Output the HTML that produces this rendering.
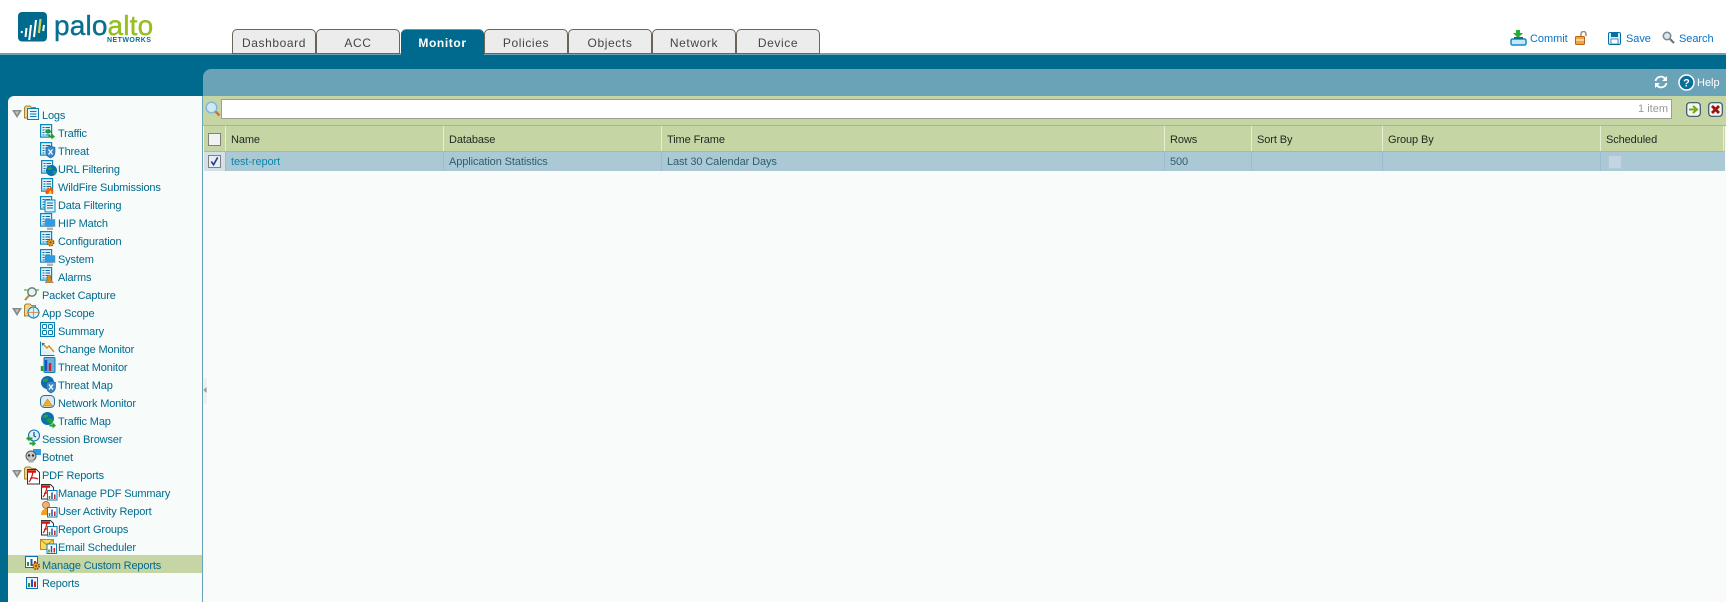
<!DOCTYPE html>
<html><head><meta charset="utf-8"><style>
html,body{margin:0;padding:0;width:1726px;height:602px;overflow:hidden;background:#fff;font-family:"Liberation Sans",sans-serif;font-size:11px}
.a{position:absolute}
.tab{position:absolute;top:29px;width:82px;height:23px;background:#ececec;border:1px solid #6b6558;border-radius:5px 5px 0 0;text-align:center;font-size:12px;line-height:26px;color:#444;letter-spacing:.6px}
.top{position:absolute;color:#0a72c4;font-size:11px;letter-spacing:-.05px;line-height:16px;top:31px}
.r{position:absolute;height:18px;line-height:20px;color:#006a8e;white-space:nowrap;font-size:11px;letter-spacing:-.15px}
.c{left:58px}.t{left:42px}
.th{position:absolute;top:126px;height:25px;line-height:28px;color:#1c2a20;font-size:11px;letter-spacing:-.1px;white-space:nowrap;border-left:1px solid #e6eed4;padding-left:5px;box-sizing:border-box}
.td{position:absolute;top:152px;height:19px;line-height:20px;color:#2e6070;font-size:11px;letter-spacing:-.1px;white-space:nowrap;border-left:1px solid #9dbccb;padding-left:5px;box-sizing:border-box}
</style></head><body>
<!-- logo -->
<svg class="a" style="left:18px;top:12px" width="29" height="30" viewBox="0 0 29 30"><rect width="29" height="29.500" rx="4" fill="#006a8e"/><g stroke-linecap="butt" fill="none" stroke="#fff"><path d="M4 19l-.4 2M8.500 16l-1 9M13 13l-1.800 15" stroke-width="2"/><path d="M18 8l-2 17" stroke-width="2"/><path d="M22.500 7l-1.600 14" stroke-width="2.200" stroke="#c4d94a"/><path d="M26 13l-.8 6" stroke-width="2"/></g></svg>
<div class="a" style="left:54px;top:6px;font-size:28px;line-height:40px;letter-spacing:.15px;color:#08708f;-webkit-text-stroke:.4px #08708f;white-space:nowrap">palo<span style="color:#94bf1f;-webkit-text-stroke:.4px #94bf1f">alto</span></div>
<div class="a" style="left:107px;top:36px;font-size:7px;line-height:9px;color:#08708f;font-weight:bold;letter-spacing:.45px">NETWORKS</div>

<!-- header band -->
<div class="a" style="left:0;top:53px;width:1726px;height:2px;background:#6aa2b8"></div>
<div class="a" style="left:0;top:55px;width:1726px;height:547px;background:#006a8e"></div>

<!-- tabs -->
<div class="tab" style="left:232px">Dashboard</div>
<div class="tab" style="left:316px">ACC</div>
<div class="a" style="left:401px;top:29px;width:83px;height:26px;background:#006a8e;border-top:1px solid #5e9cb4;box-sizing:border-box;border-radius:5px 5px 0 0;text-align:center;font-size:12px;line-height:26px;color:#fff;font-weight:bold;letter-spacing:.6px">Monitor</div>
<div class="tab" style="left:484px">Policies</div>
<div class="tab" style="left:568px">Objects</div>
<div class="tab" style="left:652px">Network</div>
<div class="tab" style="left:736px">Device</div>

<!-- top right -->
<svg class="a" style="left:1510px;top:30px" width="17" height="16" viewBox="0 0 17 16"><path d="M6 0h4v3h3L8 8 3 3h3z" fill="#22b033"/><rect x="1" y="9" width="15" height="6" rx="1.500" fill="#c6e6f6" stroke="#0b8fc4" stroke-width="1.500"/><rect x="4" y="7" width="9" height="2" fill="#0b6f96"/></svg>
<div class="top" style="left:1530px">Commit</div>
<svg class="a" style="left:1575px;top:31px" width="13" height="14" viewBox="0 0 13 14"><path d="M6 5V3a2.500 2.500 0 0 1 5 0v2" fill="none" stroke="#9a8c70" stroke-width="1.500"/><rect x="0.500" y="5.500" width="9" height="8" rx="1" fill="#f2a33a" stroke="#b5651d"/><path d="M1 9h8" stroke="#fff"/></svg>
<svg class="a" style="left:1608px;top:32px" width="13" height="13" viewBox="0 0 13 13"><rect x=".5" y=".5" width="12" height="12" rx="1.500" fill="#d6ecf7" stroke="#0a6fa5"/><rect x="3" y="1" width="7" height="4" fill="#0a6fa5"/><rect x="3" y="7" width="7" height="5" fill="#fff" stroke="#0a6fa5" stroke-width=".7"/></svg>
<div class="top" style="left:1626px">Save</div>
<svg class="a" style="left:1662px;top:31px" width="13" height="13" viewBox="0 0 13 13"><circle cx="5" cy="5" r="3.700" fill="#dfe6ea" stroke="#7a8a90" stroke-width="1.500"/><path d="M8 8l4 4" stroke="#6a757a" stroke-width="2.200"/></svg>
<div class="top" style="left:1679px">Search</div>

<!-- main panel -->
<div class="a" style="left:203px;top:69px;width:1523px;height:27px;background:#6aa2b8;border-radius:8px 0 0 0"></div>
<div class="a" style="left:203px;top:96px;width:1523px;height:29px;background:#c5d5a3"></div>
<div class="a" style="left:203px;top:125px;width:1523px;height:477px;background:#f9fbfa;border-top:1px solid #a8b2a0;box-sizing:border-box"></div>

<svg class="a" style="left:1654px;top:75px" width="14" height="14" viewBox="0 0 14 14"><path d="M1.500 6A5.500 5.500 0 0 1 11 3.500" fill="none" stroke="#fff" stroke-width="1.800"/><path d="M12.500 8A5.500 5.500 0 0 1 3 10.500" fill="none" stroke="#fff" stroke-width="1.800"/><path d="M13 1v5H8zM1 13V8h5z" fill="#fff"/></svg>
<svg class="a" style="left:1678px;top:74px" width="17" height="17" viewBox="0 0 17 17"><circle cx="8.500" cy="8.500" r="7.500" fill="#0a6f98" stroke="#fff" stroke-width="1.500"/><text x="8.500" y="12.500" text-anchor="middle" font-family="Liberation Sans" font-size="11" font-weight="bold" fill="#fff">?</text></svg>
<div class="a" style="left:1697px;top:75px;color:#fff;font-size:11px;line-height:17px">Help</div>

<!-- search -->
<svg class="a" style="left:205px;top:101px" width="16" height="17" viewBox="0 0 16 17"><circle cx="6.500" cy="6.500" r="5.300" fill="#cfe8f8" stroke="#7ab8de" stroke-width="1.400"/><path d="M10.500 10.500l4 4" stroke="#d0703a" stroke-width="2.400"/></svg>
<div class="a" style="left:221px;top:99px;width:1451px;height:20px;background:#fff;border:1px solid #9a9f90;box-sizing:border-box;text-align:right;color:#9a9a9a;font-size:11px;line-height:19px;padding-right:3px">1 item</div>
<svg class="a" style="left:1686px;top:102px" width="15" height="15" viewBox="0 0 15 15"><rect x=".7" y=".7" width="13.600" height="13.600" rx="3" fill="#f4f6f0" stroke="#35566a" stroke-width="1.200"/><path d="M3 7.500h6M7 4l4 3.500L7 11" fill="none" stroke="#7ba31c" stroke-width="2"/></svg>
<svg class="a" style="left:1708px;top:102px" width="15" height="15" viewBox="0 0 15 15"><rect x=".7" y=".7" width="13.600" height="13.600" rx="3" fill="#f4f6f0" stroke="#35566a" stroke-width="1.200"/><path d="M4 4l7 7M11 4l-7 7" stroke="#a01010" stroke-width="2.800"/></svg>

<!-- table -->
<div class="a" style="left:204px;top:126px;width:1521px;height:25px;background:#c5d5a3"></div>
<div class="a" style="left:204px;top:151px;width:1521px;height:1px;background:#a9c080"></div>
<div class="a" style="left:204px;top:152px;width:1521px;height:19px;background:#abc8d5"></div>
<div class="a" style="left:204px;top:152px;width:21px;height:19px;background:#d3e0e8"></div>
<div class="a" style="left:208px;top:133px;width:11px;height:11px;background:#f2f2f2;border:1px solid #808080"></div>
<div class="a" style="left:208px;top:155px;width:11px;height:11px;background:#e8eef2;border:1px solid #808080"></div>
<svg class="a" style="left:209px;top:156px" width="11" height="11" viewBox="0 0 12 12"><path d="M2.500 6l2.500 3.500L9.500 1.500" fill="none" stroke="#24408c" stroke-width="1.800"/></svg>
<div class="th" style="left:225px;width:218px">Name</div>
<div class="th" style="left:443px;width:218px">Database</div>
<div class="th" style="left:661px;width:503px">Time Frame</div>
<div class="th" style="left:1164px;width:87px">Rows</div>
<div class="th" style="left:1251px;width:131px">Sort By</div>
<div class="th" style="left:1382px;width:218px">Group By</div>
<div class="th" style="left:1600px;width:124px;border-right:1px solid #e6eed4">Scheduled</div>
<div class="td" style="left:225px;width:218px;color:#0a86ac">test-report</div>
<div class="td" style="left:443px;width:218px">Application Statistics</div>
<div class="td" style="left:661px;width:503px">Last 30 Calendar Days</div>
<div class="td" style="left:1164px;width:87px">500</div>
<div class="td" style="left:1251px;width:131px"></div>
<div class="td" style="left:1382px;width:218px"></div>
<div class="td" style="left:1600px;width:124px"></div>
<div class="a" style="left:1608px;top:155px;width:12px;height:12px;background:#c2d5e0;border:1px solid #b2c8d3"></div>

<!-- sidebar -->
<div class="a" style="left:8px;top:96px;width:194px;height:506px;background:#f7fbfa;border-radius:6px 0 0 0"></div>
<div class="a" style="left:8px;top:555px;width:194px;height:18px;background:#c5d5a3"></div>
<div class="a" style="left:202px;top:96px;width:1px;height:506px;background:#6aa2b8"></div>
<div class="a" style="left:203px;top:378px;width:4px;height:26px;background:#eef1ee"></div>
<svg class="a" style="left:203px;top:386px" width="4" height="8" viewBox="0 0 4 8"><path d="M3.500 1v6L.5 4z" fill="#8a9a9a"/></svg>

<svg class="a" style="left:0;top:0" width="210" height="602" viewBox="0 0 210 602">
<defs>
<g id="doc"><rect x=".6" y=".6" width="11" height="12.500" fill="#dff2fb" stroke="#0a87bd" stroke-width="1.200"/><path d="M2.500 3.500h2M5.500 3.500h4.500M2.500 6h2M5.500 6h4.500M2.500 8.500h2M5.500 8.500h4.500M2.500 11h2M5.500 11h4.500" stroke="#0a6f9e" stroke-width="1.100"/></g>
<g id="folder"><path d="M.5 13V2.500L2 1h4l1.500 1.500h4V13z" fill="#f0d68a" stroke="#a9823a"/></g>
<g id="tri"><path d="M12 110h10l-5 8z" fill="#858c8c"/><path d="M15 111.500h4l-2 3.200z" fill="#c2c8c8"/></g>
<g id="chart"><rect x=".5" y=".5" width="9.500" height="9.500" fill="#fff" stroke="#0a7fb0"/><path d="M2.500 9V6" stroke="#1fa02e" stroke-width="1.500"/><path d="M5 9V2.500" stroke="#1f4fc0" stroke-width="1.500"/><path d="M7.800 9V4.500" stroke="#d02020" stroke-width="1.500"/></g>
<g id="pdf"><path d="M.5.5h9l3 3V15H.5z" fill="#fff" stroke="#333"/><path d="M0 2.500h9" stroke="#d01010" stroke-width="2.500"/><path d="M6 3c-1 5-2 8-4 10M3 9.500c3-1 5-1 8 .5" fill="none" stroke="#d01010" stroke-width="1.200"/></g>
<g id="globe"><circle cx="6.500" cy="6.500" r="6.500" fill="#0a6fb0"/><path d="M2 4c2-2 4-2 5-1s-1 3-3 3-2-1-2-2zM8 7c2-1 4 0 4 2s-2 2-3 2-1-3-1-4z" fill="#28a040"/></g>
<g id="arrows"><path d="M0 3.500l3.500-3v2h3v2h-3v2z" fill="#1fa02e"/><path d="M10 8.500l-3.500-3v2h-3v2h3v2z" fill="#1fa02e"/></g>
<g id="shield"><path d="M.5 1.500L5 0l4.500 1.500V6c0 3-2 5-4.500 6C2.500 11 .5 9 .5 6z" fill="#3a8ac8" stroke="#1a5a90" stroke-width=".6"/><path d="M3 3.500l4 5M7 3.500l-4 5" stroke="#fff" stroke-width="1.300"/></g>
<g id="mon"><rect x="0" y="0" width="10" height="7" fill="#2a9be8" stroke="#808890" stroke-width=".5"/><rect x="2" y="8" width="6" height="2.500" fill="#b0b4b8"/></g>
<g id="gear"><circle cx="4.500" cy="4.500" r="3.200" fill="#e8a020" stroke="#805010" stroke-width="1.600" stroke-dasharray="1.500 1"/><circle cx="4.500" cy="4.500" r="1" fill="#7a4a10"/></g>
</defs>
<!-- triangles -->
<use href="#tri"/><use href="#tri" y="198"/><use href="#tri" y="360"/>
<!-- Logs -->
<g transform="translate(24,105)"><use href="#folder"/><rect x="3.500" y="3.500" width="11" height="11" fill="#e6f5fc" stroke="#0a7fb0"/><path d="M6 6.500h6.500M6 9h6.500M6 11.500h6.500" stroke="#0a7fb0"/></g>
<g transform="translate(40,124)"><use href="#doc"/><use href="#arrows" x="5" y="4"/></g>
<g transform="translate(40,142)"><use href="#doc"/><use href="#shield" x="5.500" y="4"/></g>
<g transform="translate(41,160)"><use href="#doc"/><use href="#globe" x="0" y="0" transform="translate(5,5) scale(.85)"/></g>
<g transform="translate(41,178)"><use href="#doc"/><path d="M5 16c-2-3 1-4 2-7 1 1 1 2 2 2 0-1 0-2 .5-3 1.500 2 3.500 4 2.500 8z" fill="#f05a10"/><path d="M7.500 16c0-2 1-2 1.500-4 1 1 2 2 1.500 4z" fill="#f8d020"/></g>
<g transform="translate(40,196)"><use href="#doc"/><rect x="5" y="4" width="10" height="12" fill="#dff2fb" stroke="#0a87bd"/><path d="M7 7h6M7 9.500h6M7 12h6" stroke="#0a6f9e"/></g>
<g transform="translate(40,213)"><use href="#doc"/><use href="#mon" x="5" y="6.500"/></g>
<g transform="translate(40,231)"><use href="#doc"/><use href="#gear" x="6" y="7" /></g>
<g transform="translate(40,249)"><use href="#doc"/><use href="#mon" x="5" y="6.500"/></g>
<g transform="translate(40,267)"><use href="#doc"/><path d="M5 15.500c2-1 2-3 2.500-6 .3-2 3-2 3.300 0 .5 3 .7 5 2.700 6z" fill="#d88a1a" stroke="#8a5010" stroke-width=".5"/></g>
<!-- Packet Capture -->
<g transform="translate(24,287)"><path d="M0 3h15" stroke="#1fa02e" stroke-width="1"/><circle cx="8" cy="5" r="4.200" fill="#e6f5f0" stroke="#607070" stroke-width="1.300"/><path d="M5 8.500L1 13" stroke="#c08030" stroke-width="2"/></g>
<!-- App Scope -->
<g transform="translate(24,303)"><use href="#folder"/><circle cx="9.500" cy="9.500" r="5.500" fill="#d8ecf8" stroke="#0a7fb0"/><path d="M9.500 3v13M3 9.500h13" stroke="#d08030" stroke-width=".8"/></g>
<g transform="translate(40,322)"><rect x=".5" y=".5" width="14" height="14" fill="#e6f5fc" stroke="#0a7fb0"/><rect x="2.500" y="2.500" width="4" height="4" rx="1" fill="#fff" stroke="#0a7fb0"/><rect x="8.500" y="2.500" width="4" height="4" rx="1" fill="#fff" stroke="#0a7fb0"/><rect x="2.500" y="8.500" width="4" height="4" rx="1" fill="#fff" stroke="#0a7fb0"/><rect x="8.500" y="8.500" width="4" height="4" rx="1" fill="#fff" stroke="#0a7fb0"/></g>
<g transform="translate(40,341)"><path d="M.5.5v14h14" fill="#dff2fb" stroke="#0a7fb0"/><path d="M2 2l5 5 2-2 5 6" fill="none" stroke="#d89020" stroke-width="1.500"/><path d="M2 2h3L2 5z" fill="#0a7fb0"/></g>
<g transform="translate(40,357)"><rect x="4" y=".5" width="11" height="15" rx="1" fill="#6ab0e0" stroke="#0a7fb0"/><path d="M2 14V9" stroke="#1fa02e" stroke-width="2.500"/><path d="M6 14V3" stroke="#1f4fc0" stroke-width="2.500"/><path d="M10 14V6" stroke="#d02020" stroke-width="2.500"/></g>
<g transform="translate(41,376)"><use href="#globe"/><use href="#shield" x="5" y="5"/></g>
<g transform="translate(40,395)"><rect x=".5" y=".5" width="14" height="12" rx="4" fill="#dfe8ee" stroke="#2a6f90"/><path d="M3 11l4.500-7 5 7z" fill="#f0b020" stroke="#a87010" stroke-width=".5"/></g>
<g transform="translate(41,412)"><use href="#globe"/><use href="#arrows" x="5" y="5"/></g>
<!-- Session -->
<g transform="translate(26,430)"><circle cx="8" cy="5.500" r="5.500" fill="#e0eef8" stroke="#0a6fb0"/><path d="M8 2v4l2 1" fill="none" stroke="#0a5a90" stroke-width="1.200"/><use href="#arrows" x="0" y="5"/></g>
<!-- Botnet -->
<g transform="translate(25,449)"><rect x="8" y="0" width="8" height="6" fill="#2a9be8"/><circle cx="6" cy="7" r="5" fill="#c8c8c8" stroke="#555"/><circle cx="4" cy="6.500" r="1.200" fill="#333"/><circle cx="8" cy="6.500" r="1.200" fill="#333"/><rect x="3.500" y="11" width="5" height="2.500" fill="#aaa"/></g>
<!-- PDF Reports -->
<g transform="translate(24,466)"><use href="#folder"/><use href="#pdf" x="3" y="3"/></g>
<g transform="translate(41,484)"><use href="#pdf"/><use href="#chart" x="6" y="6"/></g>
<g transform="translate(41,501)"><circle cx="5" cy="4" r="3.500" fill="#f0b070" stroke="#9a5a20" stroke-width=".7"/><path d="M0 14c0-4 2-6 5-6s5 2 5 6z" fill="#f0a020"/><use href="#chart" x="6" y="6"/></g>
<g transform="translate(41,520)"><use href="#pdf"/><use href="#chart" x="6" y="6"/></g>
<g transform="translate(40,539)"><rect x=".5" y=".5" width="13" height="10" fill="#fbd860" stroke="#c08a20"/><path d="M1 1l6 5 6-5" fill="none" stroke="#c08a20"/><use href="#chart" x="6.500" y="4.500"/></g>
<!-- Manage Custom -->
<g transform="translate(25,556)"><rect x=".5" y=".5" width="12" height="11" fill="#fff" stroke="#0a6fb0"/><path d="M3 10V6" stroke="#1fa02e" stroke-width="2"/><path d="M6.500 10V3" stroke="#1f4fc0" stroke-width="2"/><path d="M10 10V5" stroke="#d02020" stroke-width="2"/><use href="#gear" x="6.500" y="5.500"/></g>
<!-- Reports -->
<g transform="translate(26,577)"><rect x=".5" y=".5" width="11" height="11" fill="#e6f5fc" stroke="#0a6fb0"/><path d="M3 10V6" stroke="#1fa02e" stroke-width="2"/><path d="M6 10V2.500" stroke="#1f4fc0" stroke-width="2"/><path d="M9 10V4.500" stroke="#d02020" stroke-width="2"/></g>
</svg>

<div class="r t" style="top:106px">Logs</div>
<div class="r c" style="top:124px">Traffic</div>
<div class="r c" style="top:142px">Threat</div>
<div class="r c" style="top:160px">URL Filtering</div>
<div class="r c" style="top:178px">WildFire Submissions</div>
<div class="r c" style="top:196px">Data Filtering</div>
<div class="r c" style="top:214px">HIP Match</div>
<div class="r c" style="top:232px">Configuration</div>
<div class="r c" style="top:250px">System</div>
<div class="r c" style="top:268px">Alarms</div>
<div class="r t" style="top:286px">Packet Capture</div>
<div class="r t" style="top:304px">App Scope</div>
<div class="r c" style="top:322px">Summary</div>
<div class="r c" style="top:340px">Change Monitor</div>
<div class="r c" style="top:358px">Threat Monitor</div>
<div class="r c" style="top:376px">Threat Map</div>
<div class="r c" style="top:394px">Network Monitor</div>
<div class="r c" style="top:412px">Traffic Map</div>
<div class="r t" style="top:430px">Session Browser</div>
<div class="r t" style="top:448px">Botnet</div>
<div class="r t" style="top:466px">PDF Reports</div>
<div class="r c" style="top:484px">Manage PDF Summary</div>
<div class="r c" style="top:502px">User Activity Report</div>
<div class="r c" style="top:520px">Report Groups</div>
<div class="r c" style="top:538px">Email Scheduler</div>
<div class="r t" style="top:556px">Manage Custom Reports</div>
<div class="r t" style="top:574px">Reports</div>
</body></html>
